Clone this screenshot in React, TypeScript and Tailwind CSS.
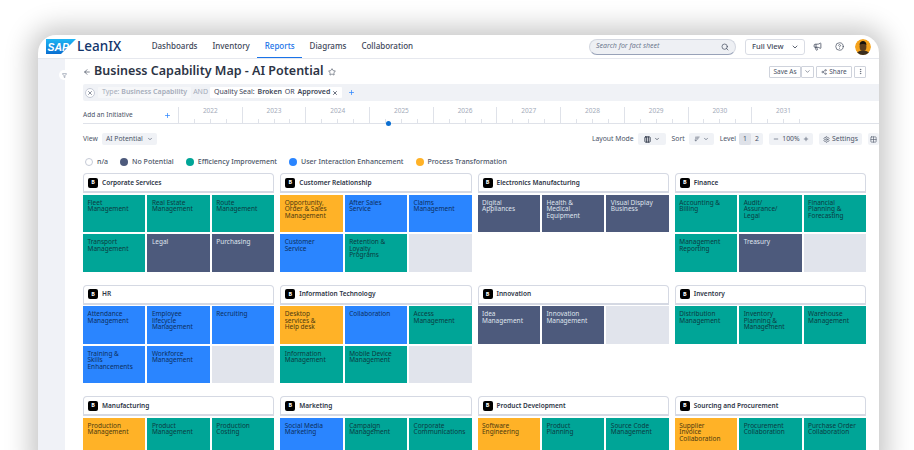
import { ArrowDownWideNarrow, ArrowLeft, ChevronDown, CircleHelp, Columns3, Filter, Grid2x2, Megaphone, Minus, MoreVertical, Plus, Search, Settings, Share2, Star, X } from 'lucide-react'

type Tone = 'teal' | 'navy' | 'blue' | 'amber' | 'empty'

const toneClass: Record<Tone, string> = {
  teal: 'bg-[#00a597] text-[#0b3b42]',
  navy: 'bg-[#4d5a7c] text-[#dfe3ec]',
  blue: 'bg-[#2a85ff] text-[#0c2f5e]',
  amber: 'bg-[#ffb227] text-[#4d3a10]',
  empty: 'bg-[#e1e4ec]',
}

const groups: { name: string; cells: [string, Tone][] }[] = [
  { name: 'Corporate Services', cells: [['Fleet\nManagement', 'teal'], ['Real Estate\nManagement', 'teal'], ['Route\nManagement', 'teal'], ['Transport\nManagement', 'teal'], ['Legal', 'navy'], ['Purchasing', 'navy']] },
  { name: 'Customer Relationship', cells: [['Opportunity,\nOrder & Sales\nManagement', 'amber'], ['After Sales\nService', 'blue'], ['Claims\nManagement', 'blue'], ['Customer\nService', 'blue'], ['Retention &\nLoyalty\nPrograms', 'teal'], ['', 'empty']] },
  { name: 'Electronics Manufacturing', cells: [['Digital\nAppliances', 'navy'], ['Health &\nMedical\nEquipment', 'navy'], ['Visual Display\nBusiness', 'navy']] },
  { name: 'Finance', cells: [['Accounting &\nBilling', 'teal'], ['Audit/\nAssurance/\nLegal', 'teal'], ['Financial\nPlanning &\nForecasting', 'teal'], ['Management\nReporting', 'teal'], ['Treasury', 'navy'], ['', 'empty']] },
  { name: 'HR', cells: [['Attendance\nManagement', 'blue'], ['Employee\nlifecycle\nManagement', 'blue'], ['Recruiting', 'blue'], ['Training &\nSkills\nEnhancements', 'blue'], ['Workforce\nManagement', 'blue'], ['', 'empty']] },
  { name: 'Information Technology', cells: [['Desktop\nservices &\nHelp desk', 'amber'], ['Collaboration', 'blue'], ['Access\nManagement', 'teal'], ['Information\nManagement', 'teal'], ['Mobile Device\nManagement', 'teal'], ['', 'empty']] },
  { name: 'Innovation', cells: [['Idea\nManagement', 'navy'], ['Innovation\nManagement', 'navy'], ['', 'empty']] },
  { name: 'Inventory', cells: [['Distribution\nManagement', 'teal'], ['Inventory\nPlanning &\nManagement', 'teal'], ['Warehouse\nManagement', 'teal']] },
  { name: 'Manufacturing', cells: [['Production\nManagement', 'amber'], ['Product\nManagement', 'teal'], ['Production\nCosting', 'teal']] },
  { name: 'Marketing', cells: [['Social Media\nMarketing', 'blue'], ['Campaign\nManagement', 'teal'], ['Corporate\nCommunications', 'teal']] },
  { name: 'Product Development', cells: [['Software\nEngineering', 'amber'], ['Product\nPlanning', 'teal'], ['Source Code\nManagement', 'teal']] },
  { name: 'Sourcing and Procurement', cells: [['Supplier\nInvoice\nCollaboration', 'amber'], ['Procurement\nCollaboration', 'teal'], ['Purchase Order\nCollaboration', 'teal']] },
]

const years = ['2022', '2023', '2024', '2025', '2026', '2027', '2028', '2029', '2030', '2031']

const legend = [
  { label: 'n/a', dot: 'bg-white border border-[#c5cad6]' },
  { label: 'No Potential', dot: 'bg-[#4d5a7c]' },
  { label: 'Efficiency Improvement', dot: 'bg-[#00a597]' },
  { label: 'User Interaction Enhancement', dot: 'bg-[#2a85ff]' },
  { label: 'Process Transformation', dot: 'bg-[#ffb227]' },
]

function Logo() {
  return (
    <div className="flex items-center gap-[1px]">
      <svg width="30" height="15" viewBox="0 0 30 15">
        <defs>
          <linearGradient id="sap" x1="0" y1="0" x2="0" y2="1">
            <stop offset="0" stopColor="#1fb6f5" />
            <stop offset="1" stopColor="#0a6ed1" />
          </linearGradient>
        </defs>
        <polygon points="0,0 30,0 15,15 0,15" fill="url(#sap)" />
        <text x="1.5" y="11.5" fontSize="10.5" fontWeight="800" fontStyle="italic" fill="#fff" fontFamily="'Liberation Sans', sans-serif">SAP</text>
      </svg>
      <span className="text-[13.5px] font-medium text-[#12346b] leading-none">LeanIX</span>
    </div>
  )
}

function Avatar() {
  return (
    <svg width="16" height="16" viewBox="0 0 16 16" className="rounded-full">
      <circle cx="8" cy="8" r="8" fill="#f5a31d" />
      <path d="M1 16c1-3.5 4-4.5 7-4.5s6 1 7 4.5z" fill="#3a2d1e" />
      <ellipse cx="8" cy="7.5" rx="3.4" ry="4.6" fill="#5a3c1c" />
      <path d="M4.6 6c0-3 1.6-4 3.4-4s3.4 1 3.4 4c-1-1.2-5.800-1.200-6.800 0z" fill="#17120d" />
    </svg>
  )
}

function TopBar() {
  const nav = ['Dashboards', 'Inventory', 'Reports', 'Diagrams', 'Collaboration']
  return (
    <header className="h-[24px] shrink-0 flex items-center pl-[8px] border-b border-[#e6e8ee]">
      <Logo />
      <nav className="flex h-full ml-[23px]">
        {nav.map((n) => (
          <span
            key={n}
            className={`h-full flex items-center px-[7.5px] text-[8px] font-medium border-b ${n === 'Reports' ? 'text-[#1a73e8] border-[#1a73e8]' : 'text-[#3d4658] border-transparent'}`}
          >
            {n}
          </span>
        ))}
      </nav>
      <div className="ml-auto w-[147px] h-[16px] flex items-center justify-between px-[6px] rounded-full bg-[#eef0f4] border border-[#d3d7e0] border-b-[#98a2b8] text-[7px] italic text-[#6f7a90]">
        Search for fact sheet
        <Search size={8} strokeWidth={2} className="text-[#3d4658]" />
      </div>
      <div className="ml-[9px] w-[60px] h-[16px] flex items-center justify-between pl-[6px] pr-[5px] rounded-[3px] border border-[#d9dce4] text-[7.500px] font-medium text-[#3d4658]">
        Full View
        <ChevronDown size={8} strokeWidth={2.5} />
      </div>
      <Megaphone size={9} strokeWidth={2} className="ml-[8px] text-[#3d4658]" />
      <CircleHelp size={9} strokeWidth={1.8} className="ml-[13px] text-[#3d4658]" />
      <div className="ml-[11px] mr-[8px]">
        <Avatar />
      </div>
    </header>
  )
}

function TitleRow() {
  return (
    <div className="h-[25px] flex items-center">
      <ArrowLeft size={8} strokeWidth={2} className="text-[#3d4658]" />
      <h1 className="ml-[3px] text-[12.500px] font-semibold text-[#2c3445] leading-none">Business Capability Map - AI Potential</h1>
      <Star size={8} strokeWidth={1.8} className="ml-[4px] text-[#3d4658]" />
      <div className="ml-auto flex items-center gap-[2px] text-[6.500px] text-[#4a5366]">
        <span className="h-[12px] w-[32px] flex items-center justify-center border border-[#cfd3dc] rounded-[1px]">Save As</span>
        <span className="h-[12px] w-[13px] -ml-[2px] flex items-center justify-center border border-[#cfd3dc] rounded-[1px]">
          <ChevronDown size={7} />
        </span>
        <span className="h-[12px] w-[36px] flex items-center justify-center gap-[2px] border border-[#cfd3dc] rounded-[1px]">
          <Share2 size={6} />
          Share
        </span>
        <span className="h-[12px] w-[12px] flex items-center justify-center border border-[#cfd3dc] rounded-[1px]">
          <MoreVertical size={7} />
        </span>
      </div>
    </div>
  )
}

function FilterBar() {
  return (
    <div className="h-[17px] -mr-[13px] flex items-center pl-[2px] bg-[#f0f2f6] text-[7px] rounded-l-[2px]">
      <span className="w-[10px] h-[10px] flex items-center justify-center rounded-full bg-white border border-[#c5cad6] text-[#4a5366]">
        <X size={6} strokeWidth={2.500} />
      </span>
      <span className="ml-[3px] h-[11px] px-[4px] flex items-center rounded-[1px] bg-[#f6f7f9] text-[#a5acba]">
        Type:&nbsp;<span className="font-semibold">Business Capability</span>
      </span>
      <span className="mx-[2px] text-[#a5acba]">AND</span>
      <span className="h-[11px] px-[4px] gap-[1px] flex items-center rounded-[1px] bg-white text-[#3d4658]">
        Quality Seal:&nbsp;<span className="font-semibold">Broken</span>&nbsp;OR&nbsp;<span className="font-semibold">Approved</span>
        <X size={6} strokeWidth={3} className="ml-[1px]" />
      </span>
      <Plus size={7} strokeWidth={2.500} className="ml-[6px] text-[#2a85ff]" />
    </div>
  )
}

function Timeline() {
  return (
    <div className="relative h-[17px] mt-[6px] -mr-[13px] flex border-b border-[#dfe2e9] text-[6.500px]">
      <div className="w-[95px] shrink-0 flex items-center justify-between pr-[7px] text-[#4a5366]">
        Add an Initiative
        <Plus size={7} strokeWidth={2.500} className="text-[#2a85ff]" />
      </div>
      {years.map((y) => (
        <div key={y} className="w-[63.700px] shrink-0 border-l border-[#dfe2e9] flex flex-col justify-between">
          <span className="text-center text-[#a3aab9] leading-none mt-[1px]">{y}</span>
          <div className="flex h-[4px]">
            <span className="flex-1" />
            <span className="flex-1 border-l border-[#dfe2e9]" />
            <span className="flex-1 border-l border-[#dfe2e9]" />
            <span className="flex-1 border-l border-[#dfe2e9]" />
          </div>
        </div>
      ))}
      <span className="absolute left-[303px] -bottom-[2.500px] w-[5px] h-[5px] rounded-full bg-[#0a6ed1]" />
    </div>
  )
}

function Pill({ children }: { children: React.ReactNode }) {
  return <span className="h-[11.500px] flex items-center rounded-[2px] bg-[#f0f2f6] text-[#4a5366]">{children}</span>
}

function ViewRow() {
  return (
    <div className="h-[12px] mt-[9px] -mr-[13px] flex items-center text-[6.800px] text-[#4a5366]">
      <span>View</span>
      <span className="ml-[4px]">
        <Pill>
          <span className="px-[4px] flex items-center gap-[4px]">
            AI Potential
            <ChevronDown size={6} strokeWidth={2.500} />
          </span>
        </Pill>
      </span>
      <span className="ml-auto">Layout Mode</span>
      <span className="ml-[4px]">
        <Pill>
          <span className="w-[28px] flex items-center justify-center gap-[3px] text-[#2c3445]">
            <Columns3 size={7} strokeWidth={3} />
            <ChevronDown size={6} strokeWidth={2.500} />
          </span>
        </Pill>
      </span>
      <span className="ml-[6px]">Sort</span>
      <span className="ml-[4px]">
        <Pill>
          <span className="w-[25px] flex items-center justify-center gap-[3px]">
            <ArrowDownWideNarrow size={6} />
            <ChevronDown size={6} strokeWidth={2.500} />
          </span>
        </Pill>
      </span>
      <span className="ml-[6px]">Level</span>
      <span className="ml-[3px]">
        <Pill>
          <span className="w-[12px] h-full flex items-center justify-center rounded-[2px] bg-[#dfe2e9]">1</span>
          <span className="w-[12px] flex items-center justify-center">2</span>
        </Pill>
      </span>
      <span className="ml-[6px]">
        <Pill>
          <span className="w-[44px] flex items-center justify-between px-[4px]">
            <Minus size={6} strokeWidth={2.500} />
            100%
            <Plus size={6} strokeWidth={2.500} />
          </span>
        </Pill>
      </span>
      <span className="ml-[6px]">
        <Pill>
          <span className="w-[43px] flex items-center justify-center gap-[2px]">
            <Settings size={7} />
            Settings
          </span>
        </Pill>
      </span>
      <span className="ml-[6px]">
        <Pill>
          <span className="w-[11px] flex justify-center">
            <Grid2x2 size={7} strokeWidth={2} />
          </span>
        </Pill>
      </span>
    </div>
  )
}

function Legend() {
  return (
    <div className="h-[10px] mt-[12px] flex items-center gap-[12px] pl-[2px] text-[7px] font-medium text-[#4a5366]">
      {legend.map((l) => (
        <span key={l.label} className="flex items-center gap-[4px]">
          <span className={`w-[8px] h-[8px] rounded-full ${l.dot}`} />
          {l.label}
        </span>
      ))}
    </div>
  )
}

function Group({ name, cells }: { name: string; cells: [string, Tone][] }) {
  return (
    <section>
      <div className="h-[20px] flex items-center gap-[4px] pl-[4px] rounded-t-[4px] border border-[#d5d9e3] border-b-2 bg-white">
        <span className="w-[10px] h-[10px] rounded-[2px] bg-black text-white text-[5.500px] font-bold flex items-center justify-center">B</span>
        <span className="text-[6.500px] font-semibold text-[#2c3445]">{name}</span>
      </div>
      <div className="grid grid-cols-3 gap-[2px] mt-[1.500px]">
        {cells.map(([label, tone], i) => (
          <div key={i} className={`h-[37.500px] px-[4.500px] pt-[5px] text-[6.500px] leading-[6.700px] whitespace-pre-line ${toneClass[tone]}`}>
            {label}
          </div>
        ))}
      </div>
    </section>
  )
}

export default function App() {
  return (
    <div className="w-[914px] h-[450px] overflow-hidden bg-white pt-[35px] pl-[38px] font-['Noto_Sans',sans-serif]">
      <div className="w-[841px] h-[430px] flex flex-col rounded-t-[18px] overflow-hidden bg-white shadow-[0_0_26px_8px_rgba(0,0,0,0.22)]">
        <TopBar />
        <div className="flex flex-1 min-h-0">
          <aside className="w-[27px] shrink-0 bg-[#f0f2f7] relative">
            <span className="absolute top-[11px] right-[-4px] w-[10px] h-[10px] rounded-full bg-white flex items-center justify-center text-[#6f7a90]">
              <Filter size={5} strokeWidth={2.500} />
            </span>
          </aside>
          <main className="flex-1 min-w-0 pl-[18px] pr-[13px]">
            <TitleRow />
            <FilterBar />
            <Timeline />
            <ViewRow />
            <Legend />
            <div className="grid grid-cols-4 gap-x-[6px] gap-y-[13px] items-start mt-[6px]">
              {groups.map((g) => (
                <Group key={g.name} name={g.name} cells={g.cells} />
              ))}
            </div>
          </main>
        </div>
      </div>
    </div>
  )
}
